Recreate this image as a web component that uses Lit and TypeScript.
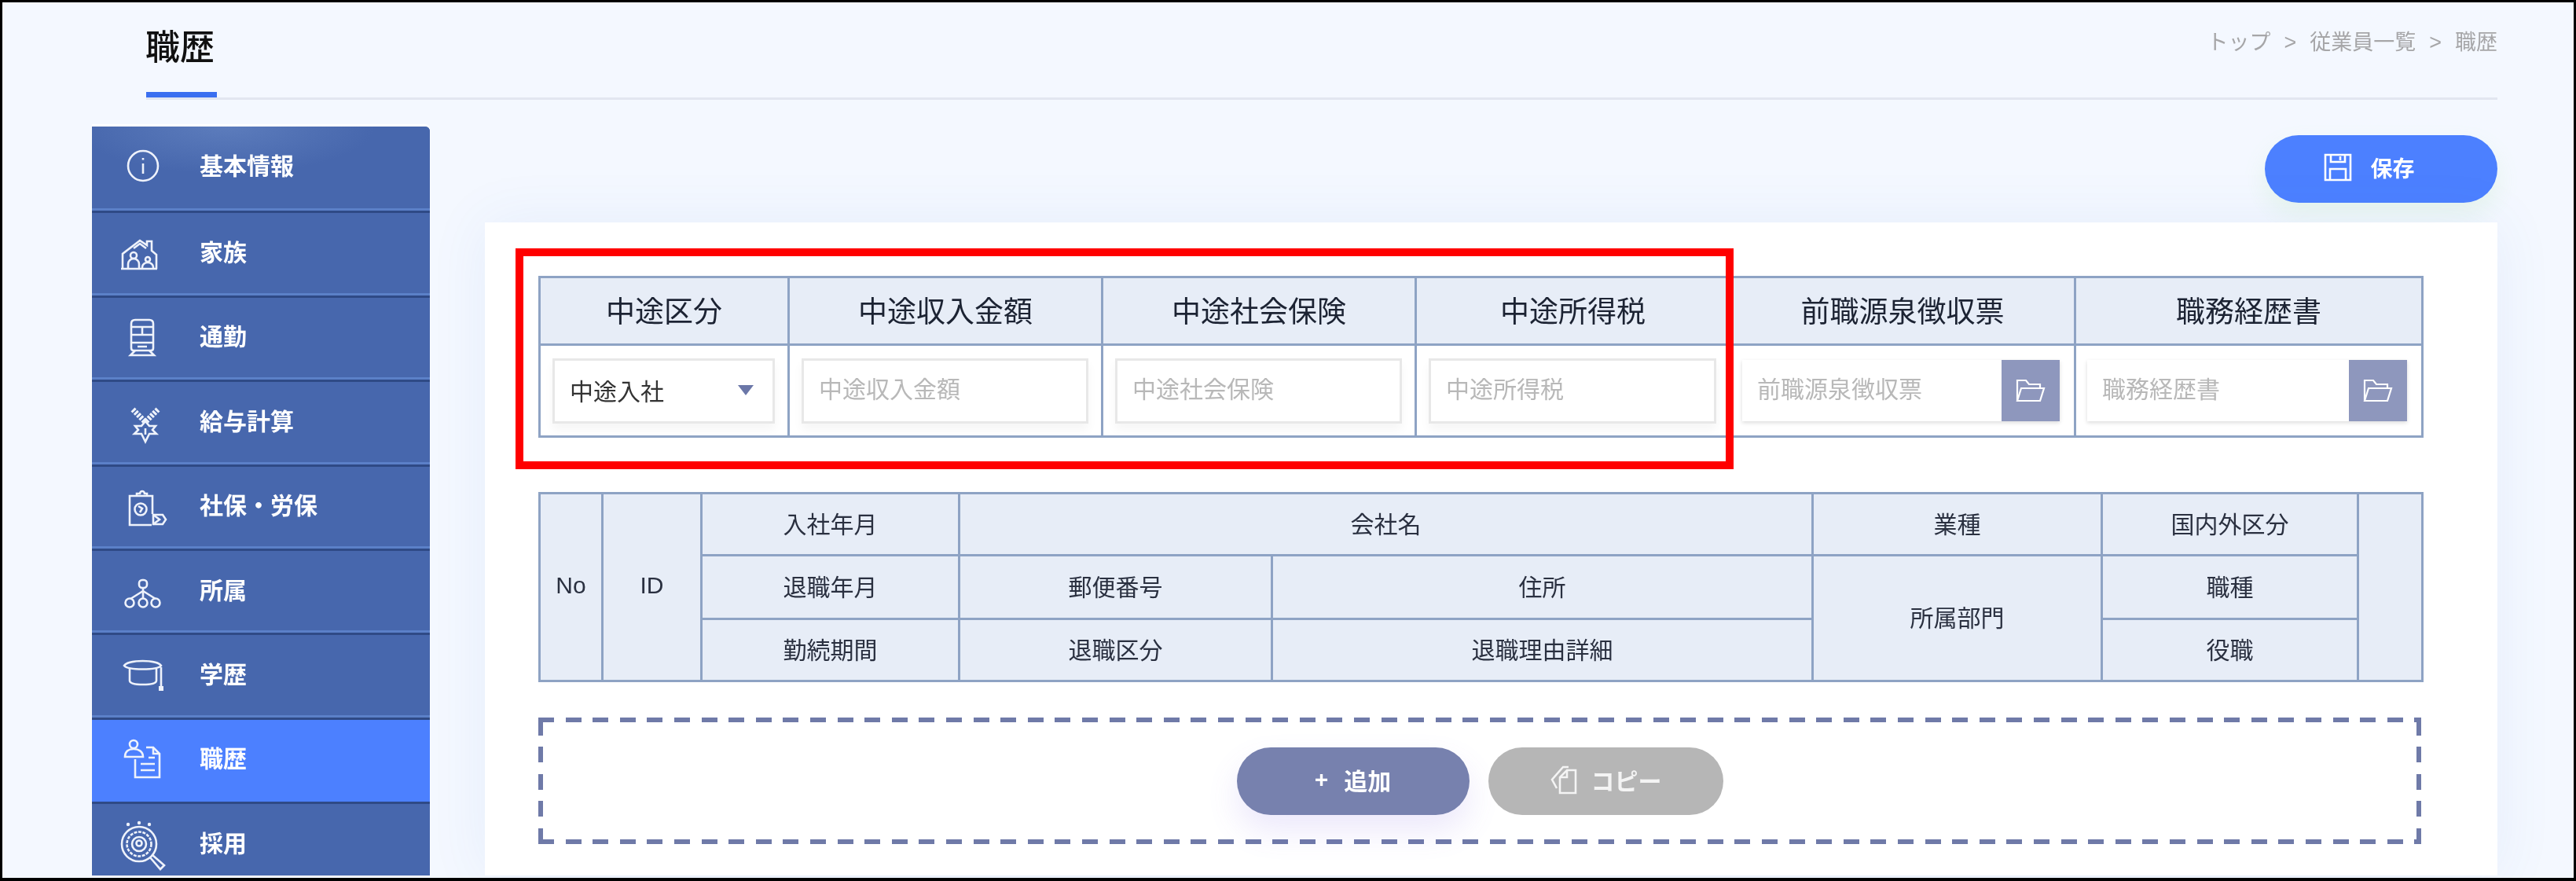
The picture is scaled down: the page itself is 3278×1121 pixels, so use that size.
import { LitElement, html, css, svg } from "lit";
import { customElement } from "lit/decorators.js";

const icons = {
  info: svg`<circle cx="30" cy="28" r="19"/><path d="M30 25v13"/><path d="M30 18v2.5"/>`,
  family: svg`<path d="M4 50V31L26 14l9 6v-5h6v12l6 5v18"/><path d="M2 50h46"/><circle cx="18" cy="33" r="4"/><path d="M11 50v-6a7 7 0 0 1 14 0v6"/><circle cx="36" cy="38" r="3"/><path d="M29 50v-2a7 6 0 0 1 14 0v2"/><path d="M18 24l8-6 8 6"/>`,
  train: svg`<path d="M15 13q0-5 5-5h18q5 0 5 5v31q0 3-3 3H18q-3 0-3-3z"/><path d="M15 17h28M15 27h28M29 17v10M15 37h28M23 42h12"/><path d="M20 47l-6 6h30l-6-6"/>`,
  pay: svg`<path stroke-width="7" stroke-dasharray="3 1.6" d="M17 14l15 15M49 14L34 29"/><path d="M33 29l-5 6H20l4 5-5 5h9l5 10 5-10h9l-5-5 4-5h-8z"/><path d="M33 38v8"/>`,
  insurance: svg`<path d="M42 40V17H13v37h28"/><path d="M22 17v-3h4a3 3 0 0 1 6 0h3v3"/><circle cx="27" cy="34" r="7.5"/><path d="M24 30l5 3-3 5"/><path d="M43 41h12l4 6-4 6H43z"/><path d="M43 41l8 6-8 6"/>`,
  org: svg`<rect x="25" y="16" width="10" height="10" rx="4"/><path d="M30 26v14M30 30L14 40M30 30l16 10"/><circle cx="13" cy="45" r="5.5"/><circle cx="30" cy="45" r="5.5"/><circle cx="46" cy="45" r="5.5"/>`,
  cap: svg`<path d="M6 18c5-8 42-8 47 0c-5 6-42 6-47 0z"/><path d="M13 22v15q0 5 17 5t17-5V22"/><path d="M53 20v24"/><rect class="solid" x="50" y="44" width="6" height="6"/>`,
  resume: svg`<path d="M34 15h9l8 8v30H20V30"/><path d="M43 15v8h8"/><path d="M27 36h18M27 44h18M37 28h8"/><circle cx="18" cy="11" r="5"/><path d="M7 27c0-7 5-10 11-10s12 3 12 10z"/>`,
  recruit: svg`<circle cx="25" cy="30" r="22"/><circle cx="25" cy="30" r="15.5" stroke-dasharray="4 1.5"/><circle cx="25" cy="30" r="9"/><circle cx="25" cy="29" r="3.5"/><path d="M39 47l13 15 5-5-15-13"/><circle class="solid" cx="11" cy="5" r="2.2"/><circle class="solid" cx="25" cy="3" r="2.2"/><circle class="solid" cx="38" cy="5" r="2.2"/>`,
};

const menu: [string, keyof typeof icons][] = [
  ["基本情報", "info"],
  ["家族", "family"],
  ["通勤", "train"],
  ["給与計算", "pay"],
  ["社保・労保", "insurance"],
  ["所属", "org"],
  ["学歴", "cap"],
  ["職歴", "resume"],
  ["採用", "recruit"],
];

const folder = html`<svg class="folder" viewBox="0 0 40 32"><path d="M3 29V3h11l4 5h14v5"/><path d="M3 29l5-16h29l-5 16z"/></svg>`;

@customElement("app-root")
export class AppRoot extends LitElement {
  static styles = css`
    :host {
      display: block;
      width: 3278px;
      height: 1121px;
      font-family: "Liberation Sans", "Noto Sans CJK JP", sans-serif;
      color: #1c2333;
    }
    .frame {
      position: relative;
      box-sizing: border-box;
      width: 3278px;
      height: 1121px;
      border: 3px solid #000;
      border-bottom-width: 4px;
      overflow: hidden;
      background: #f4f8ff;
    }
    .page {
      height: 100%;
      filter: blur(0.6px);
    }
    .head {
      display: flex;
      justify-content: space-between;
      align-items: flex-start;
      height: 121px;
      margin: 0 97px 0 183px;
      border-bottom: 3px solid #e2e6f0;
    }
    .title {
      box-sizing: border-box;
      width: 90px;
      height: 121px;
      padding-top: 36px;
      font-size: 44px;
      line-height: 44px;
      font-weight: 500;
      color: #111;
      white-space: nowrap;
      text-indent: -1px;
      border-bottom: 7px solid #3a6ff0;
    }
    .crumbs {
      display: flex;
      gap: 17px;
      margin-top: 38px;
      font-size: 27px;
      line-height: 27px;
      color: #a6a6a8;
    }
    .body {
      display: grid;
      grid-template-columns: 430px 1fr;
      column-gap: 70px;
      height: 953px;
      margin: 34px 97px 0 114px;
    }
    .side {
      height: 100%;
      overflow: hidden;
      background: #4767ad;
      border-top-right-radius: 6px;
      box-shadow: 0 -3px 0 #fff, 0 0 0 1px rgba(255, 255, 255, 0.45);
    }
    .item {
      box-sizing: border-box;
      display: flex;
      align-items: center;
      gap: 42px;
      height: 107.4px;
      padding-left: 35px;
      font-size: 30px;
      font-weight: 700;
      color: #fff;
      background: #4767ad;
      border-top: 3px solid #2f4a86;
      border-bottom: 3px solid #5b80c8;
    }
    .item span {
      padding-bottom: 6px;
    }
    .item:first-child {
      border-top: 0;
      background: radial-gradient(ellipse 190px 60px at 170px 0, #5c7cbc, #4767ad);
    }
    .item:first-child span {
      padding-bottom: 8px;
    }
    .item.on {
      background: #4c80ff;
      border-bottom-color: #4c80ff;
    }
    .item svg {
      flex: none;
      width: 60px;
      height: 60px;
      overflow: visible;
      fill: none;
      stroke: #eef2fb;
      stroke-width: 2.6;
    }
    .item svg .solid {
      fill: #eef2fb;
      stroke: none;
    }
    .main {
      display: flex;
      flex-direction: column;
      min-width: 0;
    }
    .bar {
      display: flex;
      justify-content: flex-end;
      padding: 11px 0 25px;
    }
    .btn {
      box-sizing: border-box;
      display: flex;
      align-items: center;
      justify-content: center;
      height: 86px;
      border-radius: 43px;
      font-weight: 700;
      color: #fff;
    }
    .save {
      width: 296px;
      gap: 23px;
      padding: 0 30px 5px 0;
      font-size: 28px;
      background: #4c80ff;
      box-shadow: 0 14px 30px rgba(150, 225, 130, 0.14);
    }
    .save svg {
      width: 36px;
      height: 36px;
      fill: none;
      stroke: #fff;
      stroke-width: 2.6;
    }
    .card {
      flex: 1;
      padding: 68px 97px 0 68px;
      background: #fff;
      box-shadow: 0 0 70px rgba(70, 110, 200, 0.08);
    }
    table {
      width: 2396px;
      table-layout: fixed;
      border-collapse: collapse;
    }
    th {
      padding: 0;
      text-align: center;
      font-weight: 400;
      background: #e7edf7;
      border: 3px solid #8ea3c4;
    }
    .top th {
      height: 86px;
      padding-bottom: 3px;
      box-sizing: border-box;
      font-size: 37px;
    }
    .top td {
      height: 114px;
      padding: 0 16px 0 15px;
      border: 3px solid #8ea3c4;
    }
    .top td.file {
      padding: 0 18px 0 14px;
    }
    .field {
      box-sizing: border-box;
      display: block;
      width: 100%;
      height: 83px;
      padding: 0 19px 2px;
      border: 3px solid #e8e8e8;
      outline: 0;
      font: inherit;
      font-size: 30px;
      color: #333;
      background: #fff;
      box-shadow: 0 8px 12px rgba(0, 0, 0, 0.04);
    }
    .field::placeholder {
      color: #b8b8b8;
    }
    .select {
      display: flex;
      align-items: center;
      justify-content: space-between;
      padding-right: 24px;
    }
    .select i {
      width: 0;
      height: 0;
      border-left: 10px solid transparent;
      border-right: 10px solid transparent;
      border-top: 13px solid #6b77a8;
    }
    .picker {
      display: flex;
      height: 78px;
      box-shadow: 0 2px 5px rgba(0, 0, 0, 0.14);
    }
    .picker .field {
      flex: 1;
      min-width: 0;
      height: 100%;
      border: 0;
      box-shadow: none;
    }
    .open {
      flex: none;
      display: flex;
      align-items: center;
      justify-content: center;
      width: 74px;
      background: #8e97bd;
    }
    .folder {
      width: 40px;
      height: 32px;
      fill: none;
      stroke: #fff;
      stroke-width: 2.2;
    }
    .list {
      margin-top: 69px;
    }
    .list th {
      box-sizing: border-box;
      height: 79px;
      padding-bottom: 5px;
      font-size: 30px;
      color: #2a3040;
    }
    .list .mid th {
      height: 81px;
    }
    .add {
      display: flex;
      justify-content: center;
      align-items: center;
      gap: 24px;
      width: 2396px;
      height: 161px;
      margin-top: 45px;
      background:
        repeating-linear-gradient(90deg, #6f7aa8 0 20px, transparent 20px 34.6px) 0 0 / 100% 6px no-repeat,
        repeating-linear-gradient(90deg, #6f7aa8 0 20px, transparent 20px 34.6px) 0 100% / 100% 6px no-repeat,
        repeating-linear-gradient(0deg, #6f7aa8 0 20px, transparent 20px 34.6px) 0 0 / 6px 100% no-repeat,
        repeating-linear-gradient(0deg, #6f7aa8 0 20px, transparent 20px 34.6px) 100% 0 / 6px 100% no-repeat;
    }
    .new {
      width: 296px;
      gap: 20px;
      padding-bottom: 4px;
      font-size: 30px;
      background: #7781ae;
      box-shadow: 0 20px 40px rgba(120, 90, 230, 0.14);
    }
    .copy {
      width: 299px;
      gap: 13px;
      padding-bottom: 4px;
      font-size: 30px;
      color: #f4f4f4;
      background: #b6b6b6;
    }
    .copy svg {
      width: 40px;
      height: 38px;
      fill: none;
      stroke: #f4f4f4;
      stroke-width: 2.6;
    }
    .mark {
      position: absolute;
      left: 653px;
      top: 313px;
      width: 1550px;
      height: 281px;
      box-sizing: border-box;
      border: 10px solid #f00;
    }
  `;

  render() {
    return html`
      <div class="frame">
        <div class="page">
          <header class="head">
            <div class="title">職歴</div>
            <nav class="crumbs">
              <span>トップ</span><span>&gt;</span><span>従業員一覧</span><span>&gt;</span><span>職歴</span>
            </nav>
          </header>
          <div class="body">
            <aside class="side">
              ${menu.map(
                ([label, icon]) => html`
                  <div class="item ${label === "職歴" ? "on" : ""}">
                    <svg viewBox="0 0 60 60">${icons[icon]}</svg>
                    <span>${label}</span>
                  </div>
                `,
              )}
            </aside>
            <main class="main">
              <div class="bar">
                <div class="btn save">
                  <svg viewBox="0 0 36 36">
                    <path d="M2 2h32v32H2z" />
                    <path d="M9 2v9h18V2M21 4v5" />
                    <path d="M8 34V20h20v14" />
                  </svg>
                  <span>保存</span>
                </div>
              </div>
              <section class="card">
                <table class="top">
                  <colgroup>
                    <col style="width:317px" /><col style="width:399px" /><col style="width:399px" />
                    <col style="width:400px" /><col style="width:439px" /><col style="width:442px" />
                  </colgroup>
                  <tr>
                    <th>中途区分</th><th>中途収入金額</th><th>中途社会保険</th><th>中途所得税</th><th>前職源泉徴収票</th><th>職務経歴書</th>
                  </tr>
                  <tr>
                    <td><div class="field select"><span>中途入社</span><i></i></div></td>
                    <td><input class="field" placeholder="中途収入金額" /></td>
                    <td><input class="field" placeholder="中途社会保険" /></td>
                    <td><input class="field" placeholder="中途所得税" /></td>
                    <td class="file"><div class="picker"><input class="field" placeholder="前職源泉徴収票" /><div class="open">${folder}</div></div></td>
                    <td class="file"><div class="picker"><input class="field" placeholder="職務経歴書" /><div class="open">${folder}</div></div></td>
                  </tr>
                </table>
                <table class="list">
                  <colgroup>
                    <col style="width:80px" /><col style="width:126px" /><col style="width:328px" /><col style="width:398px" />
                    <col style="width:688px" /><col style="width:368px" /><col style="width:326px" /><col style="width:82px" />
                  </colgroup>
                  <tr>
                    <th rowspan="3">No</th><th rowspan="3">ID</th><th>入社年月</th><th colspan="2">会社名</th><th>業種</th><th>国内外区分</th><th rowspan="3"></th>
                  </tr>
                  <tr class="mid">
                    <th>退職年月</th><th>郵便番号</th><th>住所</th><th rowspan="2">所属部門</th><th>職種</th>
                  </tr>
                  <tr>
                    <th>勤続期間</th><th>退職区分</th><th>退職理由詳細</th><th>役職</th>
                  </tr>
                </table>
                <div class="add">
                  <div class="btn new"><span>+</span><span>追加</span></div>
                  <div class="btn copy">
                    <svg viewBox="0 0 40 38">
                      <path d="M9 30L3 19 17 3h7" />
                      <path d="M13 36V16l9-9h11v29z" />
                      <path d="M13 16h9V7" />
                    </svg>
                    <span>コピー</span>
                  </div>
                </div>
              </section>
            </main>
          </div>
        </div>
        <div class="mark"></div>
      </div>
    `;
  }
}
